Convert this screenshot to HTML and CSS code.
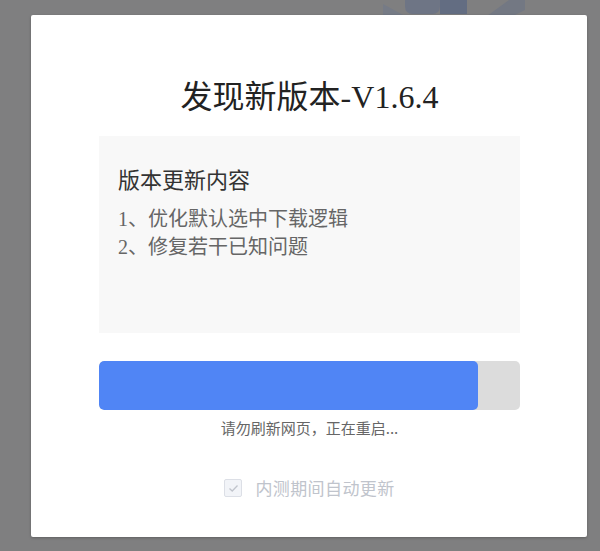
FILE: index.html
```html
<!DOCTYPE html>
<html lang="zh-CN">
<head>
<meta charset="utf-8">
<title>发现新版本</title>
<link rel="stylesheet" href="styles.css">
</head>
<body>
<svg class="bg-logo" width="160" height="16" viewBox="0 0 160 16">
  <polygon points="0,4 22,16 0,16" fill="#767b86"/>
  <path d="M22,0 H57 V6 Q57,14 49,14 H30 Q22,14 22,6 Z" fill="#6e7585"/>
  <rect x="57" y="0" width="27" height="14" fill="#636d82"/>
  <polygon points="104,16 126,0 142,0 142,10 130,16" fill="#737883"/>
</svg>
<div class="modal">
  <h1 class="title">发现新版本-V1.6.4</h1>
  <div class="notes">
    <div class="notes-head">版本更新内容</div>
    <ul class="notes-list">
      <li>1、优化默认选中下载逻辑</li>
      <li>2、修复若干已知问题</li>
    </ul>
  </div>
  <div class="bar"><div class="bar-fill" style="width: 90%"></div></div>
  <div class="status">请勿刷新网页，正在重启...</div>
  <label class="auto">
    <span class="check">
      <svg width="11" height="9" viewBox="0 0 11 9"><polyline points="1.5,4.5 4.2,7 9.5,1.5" fill="none" stroke="#c0c4cc" stroke-width="1.3"/></svg>
    </span>
    <span class="auto-text">内测期间自动更新</span>
  </label>
</div>
</body>
</html>
```

FILE: styles.css
```css
html, body {
  margin: 0;
  padding: 0;
}
body {
  width: 600px;
  height: 551px;
  background: #7f7f80;
  overflow: hidden;
  position: relative;
  font-family: "Noto Sans CJK SC", sans-serif;
}
.bg-logo {
  position: absolute;
  left: 383px;
  top: 0;
}
.modal {
  position: relative;
  margin: 15px 0 0 31px;
  width: 556px;
  height: 522px;
  box-sizing: border-box;
  padding: 62px 67px 0 68px;
  background: #fff;
  border-radius: 2px;
  box-shadow: 0 1px 3px rgba(0,0,0,0.25);
}
.title {
  margin: 0;
  font-family: "Liberation Serif", "Noto Sans CJK SC", serif;
  font-weight: normal;
  font-size: 32px;
  line-height: 40px;
  color: #222;
  text-align: center;
}
.notes {
  margin-top: 19px;
  height: 197px;
  box-sizing: border-box;
  padding: 27px 19px 0 19px;
  background: #f8f8f8;
}
.notes-head {
  font-size: 22px;
  line-height: 30px;
  color: #333;
}
.notes-list {
  list-style: none;
  margin: 12px 0 0 0;
  padding: 0;
  font-family: "Liberation Serif", "Noto Sans CJK SC", serif;
  font-size: 20px;
  line-height: 28px;
  color: #666;
}
.bar {
  margin-top: 28px;
  height: 49px;
  background: #dcdcdc;
  border-radius: 5px;
  overflow: hidden;
}
.bar-fill {
  height: 100%;
  background: #5085f5;
  border-radius: 5px;
}
.status {
  margin-top: 8px;
  font-size: 15px;
  line-height: 20px;
  color: #666;
  text-align: center;
}
.auto {
  margin-top: 38px;
  display: flex;
  justify-content: center;
  align-items: center;
  gap: 13px;
  height: 24px;
}
.check {
  width: 16px;
  height: 16px;
  border: 1px solid #dcdfe6;
  border-radius: 2px;
  background: #f2f4f8;
  display: flex;
  align-items: center;
  justify-content: center;
}
.auto-text {
  font-size: 17px;
  letter-spacing: 0.4px;
  line-height: 24px;
  color: #c0c4cc;
}
```
